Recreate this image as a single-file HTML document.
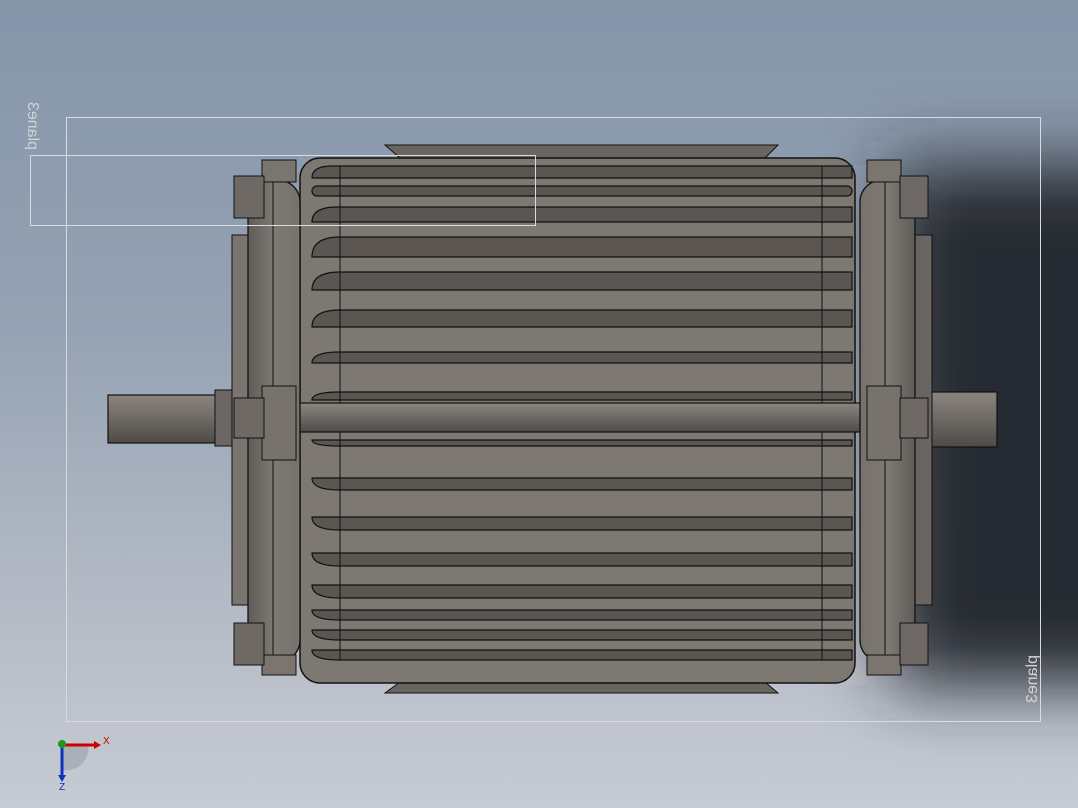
<!DOCTYPE html>
<html><head><style>
html,body{margin:0;padding:0}
body{width:1078px;height:808px;overflow:hidden;background:linear-gradient(#8595a9 0%,#95a2b3 40%,#b4bbc6 75%,#c7cbd3 100%);position:relative;font-family:"Liberation Sans",sans-serif}
svg{position:absolute;left:0;top:0}
</style></head><body>
<svg width="1078" height="808" viewBox="0 0 1078 808">
<defs>
<filter id="bl" x="-50%" y="-50%" width="200%" height="200%"><feGaussianBlur stdDeviation="35"/></filter>
<linearGradient id="rod" x1="0" y1="0" x2="0" y2="1"><stop offset="0" stop-color="#8a857f"/><stop offset=".5" stop-color="#6e6964"/><stop offset="1" stop-color="#4e4a46"/></linearGradient>
<linearGradient id="cap" x1="0" y1="0" x2="1" y2="0"><stop offset="0" stop-color="#5f5b57"/><stop offset=".5" stop-color="#7e7973"/><stop offset="1" stop-color="#76716b"/></linearGradient>
<linearGradient id="capr" x1="1" y1="0" x2="0" y2="0"><stop offset="0" stop-color="#5f5b57"/><stop offset=".5" stop-color="#7e7973"/><stop offset="1" stop-color="#76716b"/></linearGradient>
</defs>
<!-- shadow -->
<rect x="890" y="165" width="300" height="520" fill="#262a30" filter="url(#bl)"/>
<!-- shafts -->
<rect x="108" y="395" width="112" height="48" fill="url(#rod)" stroke="#111" stroke-width="1.2"/>
<rect x="215" y="390" width="20" height="56" fill="#6c6762" stroke="#111"/>
<rect x="925" y="392" width="72" height="55" fill="url(#rod)" stroke="#111" stroke-width="1.2"/>
<!-- feet -->
<polygon points="385,145 778,145 765,158 400,158" fill="#6a6560" stroke="#111"/>
<polygon points="385,693 778,693 765,682 400,682" fill="#6a6560" stroke="#111"/>
<rect x="232" y="235" width="18" height="370" fill="#7a756f" stroke="#111"/>
<rect x="912" y="235" width="20" height="370" fill="#6a6560" stroke="#111"/>
<!-- body -->
<rect x="300" y="158" width="555" height="525" rx="20" fill="#7d7872" stroke="#111" stroke-width="1.5"/>
<g fill="#5b5651" stroke="#111" stroke-width="1.2">
<path d="M312,178 h540 v-12 h-520 q-20,0 -20,12z"/>
<rect x="312" y="186" width="540" height="10" rx="5"/>
<path d="M312,222 q0,-15 25,-15 h515 v15z"/>
<path d="M312,257 q0,-20 28,-20 h512 v20z"/>
<path d="M312,290 q0,-18 28,-18 h512 v18z"/>
<path d="M312,327 q0,-17 28,-17 h512 v17z"/>
<path d="M312,363 q0,-11 28,-11 h512 v11z"/>
<path d="M312,400 q0,-8 28,-8 h512 v8z"/>
<path d="M312,440 q0,6 28,6 h512 v-6z"/>
<path d="M312,478 q0,12 28,12 h512 v-12z"/>
<path d="M312,517 q0,13 28,13 h512 v-13z"/>
<path d="M312,553 q0,13 28,13 h512 v-13z"/>
<path d="M312,585 q0,13 28,13 h512 v-13z"/>
<path d="M312,610 q0,10 28,10 h512 v-10z"/>
<path d="M312,630 q0,10 28,10 h512 v-10z"/>
<path d="M312,650 q0,10 28,10 h512 v-10z"/>
</g>
<g stroke="#111" stroke-width="1" fill="none">
<line x1="340" y1="166" x2="340" y2="660"/><line x1="822" y1="166" x2="822" y2="660"/>
</g>
<!-- rod -->
<rect x="296" y="403" width="572" height="29" fill="url(#rod)" stroke="#111" stroke-width="1.2"/>
<!-- left end cap -->
<rect x="248" y="180" width="52" height="482" rx="22" fill="url(#cap)" stroke="#111" stroke-width="1.3"/>
<line x1="273" y1="180" x2="273" y2="662" stroke="#111"/>
<rect x="262" y="160" width="34" height="22" fill="#7a756f" stroke="#111"/>
<rect x="262" y="655" width="34" height="20" fill="#7a756f" stroke="#111"/>
<rect x="262" y="386" width="34" height="74" fill="#77726c" stroke="#111"/>
<rect x="234" y="176" width="30" height="42" fill="#6e6964" stroke="#111"/>
<rect x="234" y="623" width="30" height="42" fill="#6e6964" stroke="#111"/>
<rect x="234" y="398" width="30" height="40" fill="#6e6964" stroke="#111"/>
<!-- right end cap -->
<rect x="860" y="180" width="55" height="482" rx="22" fill="url(#capr)" stroke="#111" stroke-width="1.3"/>
<line x1="885" y1="180" x2="885" y2="662" stroke="#111"/>
<rect x="867" y="160" width="34" height="22" fill="#7a756f" stroke="#111"/>
<rect x="867" y="655" width="34" height="20" fill="#7a756f" stroke="#111"/>
<rect x="867" y="386" width="34" height="74" fill="#77726c" stroke="#111"/>
<rect x="900" y="176" width="28" height="42" fill="#6e6964" stroke="#111"/>
<rect x="900" y="623" width="28" height="42" fill="#6e6964" stroke="#111"/>
<rect x="900" y="398" width="28" height="40" fill="#6e6964" stroke="#111"/>
<!-- planes -->
<g stroke="#d8dbe0" stroke-width="1" fill="none">
<rect x="66.5" y="117.5" width="974" height="604"/>
<rect x="30.5" y="155.5" width="505" height="70"/>
<line x1="535.5" y1="198" x2="535.5" y2="225"/>
</g>
<text transform="translate(28,150) rotate(-90) scale(1,-1)" font-size="16" fill="#d0d4da" font-family="Liberation Sans">plane3</text>
<text transform="translate(1037,655) rotate(90) scale(1,-1)" font-size="16" fill="#d0d4da" font-family="Liberation Sans">plane3</text>
<!-- triad -->
<path d="M62,745 L62,770 A22,22 0 0 0 88,745Z" fill="#9aa0a8" opacity=".6"/>
<line x1="62" y1="745" x2="94" y2="745" stroke="#c00" stroke-width="3"/>
<polygon points="94,741 101,745 94,749" fill="#c00"/>
<line x1="62" y1="745" x2="62" y2="775" stroke="#1030c0" stroke-width="3"/>
<polygon points="58,775 62,782 66,775" fill="#1030c0"/>
<circle cx="62" cy="744" r="4" fill="#1a9a1a"/>
<text x="103" y="744" font-size="10" fill="#c00">X</text>
<text x="59" y="790" font-size="10" fill="#1030c0">Z</text>
</svg>
</body></html>
